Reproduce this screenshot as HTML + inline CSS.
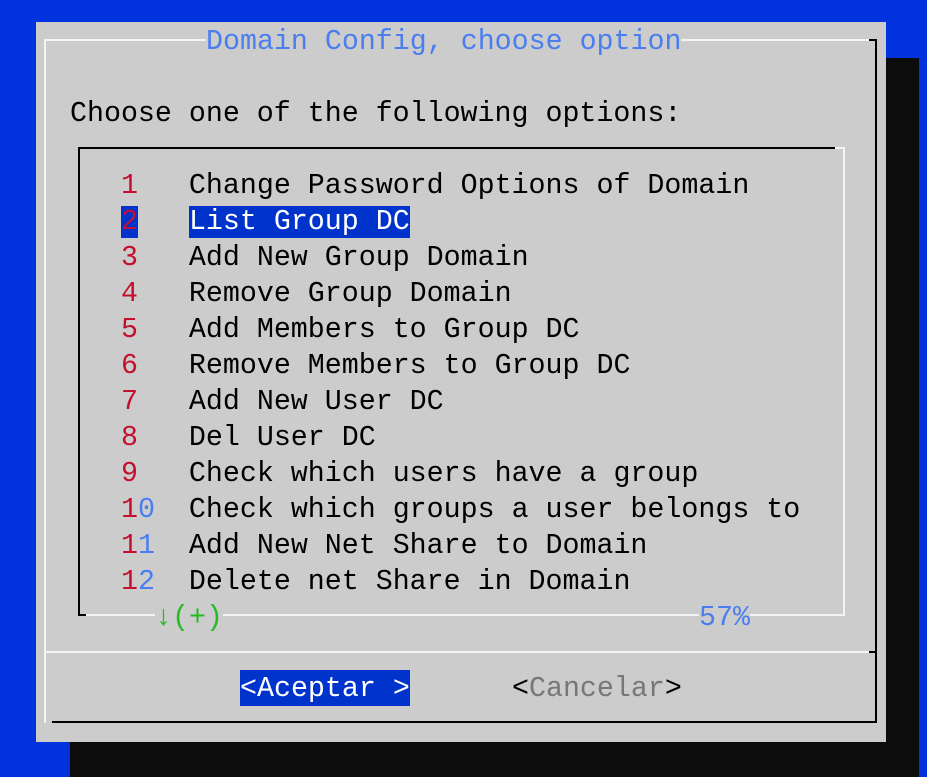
<!DOCTYPE html>
<html><head><style>
*{margin:0;padding:0}
body{width:927px;height:777px;background:#0033dd;position:relative;overflow:hidden;font-family:"Liberation Mono",monospace;font-size:28.3px}
.a{position:absolute}
.t{position:absolute;line-height:36px;height:36px;white-space:pre;color:#000}
.r{color:#c4102e}.b{color:#4a7ef0}.g{color:#22bb22}
</style></head><body>
<div class="a" style="left:70px;top:58px;width:849px;height:719px;background:#0c0c0c"></div>
<div class="a" style="left:36px;top:22px;width:850px;height:720px;background:#cccccc"></div>
<!-- outer border -->
<div class="a" style="left:44px;top:39px;width:832px;height:2px;background:#f4f4f4"></div>
<div class="a" style="left:44px;top:39px;width:2px;height:684px;background:#f4f4f4"></div>
<div class="a" style="left:875px;top:39px;width:2px;height:684px;background:#000"></div>
<div class="a" style="left:869px;top:39px;width:8px;height:2px;background:#000"></div>
<div class="a" style="left:52px;top:721px;width:825px;height:2px;background:#000"></div>
<div class="a" style="left:44px;top:651px;width:832px;height:2px;background:#f4f4f4"></div>
<div class="a" style="left:869px;top:651px;width:8px;height:2px;background:#000"></div>
<!-- list box -->
<div class="a" style="left:78px;top:147px;width:757px;height:2px;background:#000"></div>
<div class="a" style="left:78px;top:147px;width:2px;height:469px;background:#000"></div>
<div class="a" style="left:78px;top:614px;width:8px;height:2px;background:#000"></div>
<div class="a" style="left:843px;top:147px;width:2px;height:469px;background:#f4f4f4"></div>
<div class="a" style="left:835px;top:147px;width:10px;height:2px;background:#f4f4f4"></div>
<div class="a" style="left:86px;top:614px;width:759px;height:2px;background:#f4f4f4"></div>

<div class="t b" style="left:206px;top:24px;background:#cccccc">Domain Config, choose option</div>
<div class="t" style="left:70px;top:96px">Choose one of the following options:</div>

<div class="t" style="left:121px;top:168px"><span class="r">1</span>   Change Password Options of Domain</div>
<div class="t" style="left:121px;top:204px"><span class="r" style="background:#0033cc">2</span>   <span style="background:#0033cc;color:#fff">List Group DC</span></div>
<div class="t" style="left:121px;top:240px"><span class="r">3</span>   Add New Group Domain</div>
<div class="t" style="left:121px;top:276px"><span class="r">4</span>   Remove Group Domain</div>
<div class="t" style="left:121px;top:312px"><span class="r">5</span>   Add Members to Group DC</div>
<div class="t" style="left:121px;top:348px"><span class="r">6</span>   Remove Members to Group DC</div>
<div class="t" style="left:121px;top:384px"><span class="r">7</span>   Add New User DC</div>
<div class="t" style="left:121px;top:420px"><span class="r">8</span>   Del User DC</div>
<div class="t" style="left:121px;top:456px"><span class="r">9</span>   Check which users have a group</div>
<div class="t" style="left:121px;top:492px"><span class="r">1</span><span class="b">0</span>  Check which groups a user belongs to</div>
<div class="t" style="left:121px;top:528px"><span class="r">1</span><span class="b">1</span>  Add New Net Share to Domain</div>
<div class="t" style="left:121px;top:564px"><span class="r">1</span><span class="b">2</span>  Delete net Share in Domain</div>

<div class="t g" style="left:155px;top:600px;background:#cccccc">↓(+)</div>
<div class="t b" style="left:699px;top:600px;background:#cccccc">57%</div>

<div class="t" style="left:240px;top:670px;background:#0033cc;color:#fff;line-height:38px">&lt;Aceptar &gt;</div>
<div class="t" style="left:512px;top:671px">&lt;<span style="color:#777">Cancelar</span>&gt;</div>
</body></html>
